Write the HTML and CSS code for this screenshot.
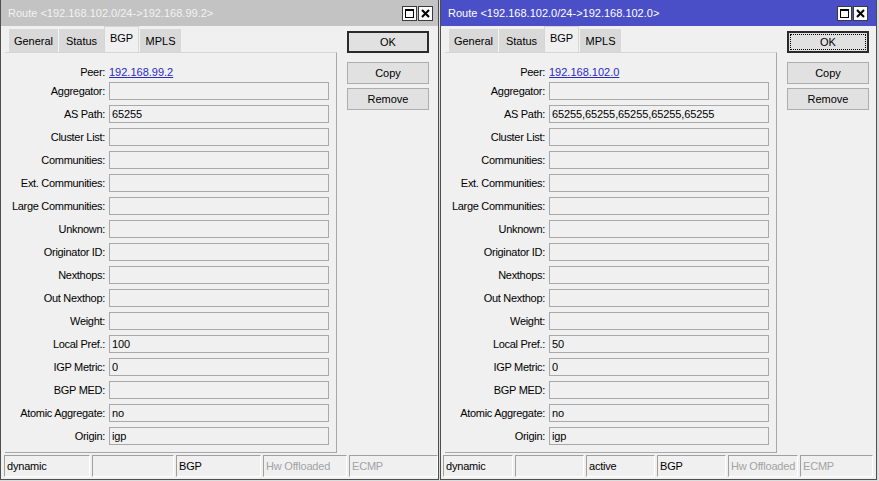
FILE: index.html
```html
<!DOCTYPE html>
<html>
<head>
<meta charset="utf-8">
<link rel="stylesheet" href="styles.css">
</head>
<body>
<div class="desktop">
  <div class="window win-left">
    <div class="titlebar inactive">
      <span class="title">Route &lt;192.168.102.0/24-&gt;192.168.99.2&gt;</span>
      <div class="tbtns">
        <span class="tbtn"><svg width="11" height="11" viewBox="0 0 11 11"><rect x="1.5" y="1.5" width="8" height="8" fill="none" stroke="#000" stroke-width="1"/><rect x="1" y="1" width="9" height="2" fill="#000"/></svg></span>
        <span class="tbtn"><svg width="11" height="11" viewBox="0 0 11 11"><path d="M2 2 L9 9 M9 2 L2 9" stroke="#000" stroke-width="2"/></svg></span>
      </div>
    </div>
    <div class="main">
      <div class="leftcol">
        <div class="tabs">
          <span class="tab t-general">General</span>
          <span class="tab t-status">Status</span>
          <span class="tab t-bgp sel">BGP</span>
          <span class="tab t-mpls">MPLS</span>
        </div>
        <div class="panel">
          <div class="row peer"><span class="lbl">Peer:</span><a class="link">192.168.99.2</a></div>
          <div class="row"><span class="lbl">Aggregator:</span><span class="box"></span></div>
          <div class="row"><span class="lbl">AS Path:</span><span class="box">65255</span></div>
          <div class="row"><span class="lbl">Cluster List:</span><span class="box"></span></div>
          <div class="row"><span class="lbl">Communities:</span><span class="box"></span></div>
          <div class="row"><span class="lbl">Ext. Communities:</span><span class="box"></span></div>
          <div class="row"><span class="lbl">Large Communities:</span><span class="box"></span></div>
          <div class="row"><span class="lbl">Unknown:</span><span class="box"></span></div>
          <div class="row"><span class="lbl">Originator ID:</span><span class="box"></span></div>
          <div class="row"><span class="lbl">Nexthops:</span><span class="box"></span></div>
          <div class="row"><span class="lbl">Out Nexthop:</span><span class="box"></span></div>
          <div class="row"><span class="lbl">Weight:</span><span class="box"></span></div>
          <div class="row"><span class="lbl">Local Pref.:</span><span class="box">100</span></div>
          <div class="row"><span class="lbl">IGP Metric:</span><span class="box">0</span></div>
          <div class="row"><span class="lbl">BGP MED:</span><span class="box"></span></div>
          <div class="row"><span class="lbl">Atomic Aggregate:</span><span class="box">no</span></div>
          <div class="row"><span class="lbl">Origin:</span><span class="box">igp</span></div>
        </div>
      </div>
      <div class="buttons">
        <span class="btn default">OK</span>
        <span class="btn gap">Copy</span>
        <span class="btn">Remove</span>
      </div>
    </div>
    <div class="status st-left">
      <span class="cell">dynamic</span>
      <span class="cell"></span>
      <span class="cell">BGP</span>
      <span class="cell dim">Hw Offloaded</span>
      <span class="cell dim">ECMP</span>
    </div>
  </div>

  <div class="window win-right">
    <div class="titlebar active">
      <span class="title">Route &lt;192.168.102.0/24-&gt;192.168.102.0&gt;</span>
      <div class="tbtns">
        <span class="tbtn"><svg width="11" height="11" viewBox="0 0 11 11"><rect x="1.5" y="1.5" width="8" height="8" fill="none" stroke="#000" stroke-width="1"/><rect x="1" y="1" width="9" height="2" fill="#000"/></svg></span>
        <span class="tbtn"><svg width="11" height="11" viewBox="0 0 11 11"><path d="M2 2 L9 9 M9 2 L2 9" stroke="#000" stroke-width="2"/></svg></span>
      </div>
    </div>
    <div class="main">
      <div class="leftcol">
        <div class="tabs">
          <span class="tab t-general">General</span>
          <span class="tab t-status">Status</span>
          <span class="tab t-bgp sel">BGP</span>
          <span class="tab t-mpls">MPLS</span>
        </div>
        <div class="panel">
          <div class="row peer"><span class="lbl">Peer:</span><a class="link">192.168.102.0</a></div>
          <div class="row"><span class="lbl">Aggregator:</span><span class="box"></span></div>
          <div class="row"><span class="lbl">AS Path:</span><span class="box">65255,65255,65255,65255,65255</span></div>
          <div class="row"><span class="lbl">Cluster List:</span><span class="box"></span></div>
          <div class="row"><span class="lbl">Communities:</span><span class="box"></span></div>
          <div class="row"><span class="lbl">Ext. Communities:</span><span class="box"></span></div>
          <div class="row"><span class="lbl">Large Communities:</span><span class="box"></span></div>
          <div class="row"><span class="lbl">Unknown:</span><span class="box"></span></div>
          <div class="row"><span class="lbl">Originator ID:</span><span class="box"></span></div>
          <div class="row"><span class="lbl">Nexthops:</span><span class="box"></span></div>
          <div class="row"><span class="lbl">Out Nexthop:</span><span class="box"></span></div>
          <div class="row"><span class="lbl">Weight:</span><span class="box"></span></div>
          <div class="row"><span class="lbl">Local Pref.:</span><span class="box">50</span></div>
          <div class="row"><span class="lbl">IGP Metric:</span><span class="box">0</span></div>
          <div class="row"><span class="lbl">BGP MED:</span><span class="box"></span></div>
          <div class="row"><span class="lbl">Atomic Aggregate:</span><span class="box">no</span></div>
          <div class="row"><span class="lbl">Origin:</span><span class="box">igp</span></div>
        </div>
      </div>
      <div class="buttons">
        <span class="btn default focus">OK</span>
        <span class="btn gap">Copy</span>
        <span class="btn">Remove</span>
      </div>
    </div>
    <div class="status st-right">
      <span class="cell">dynamic</span>
      <span class="cell"></span>
      <span class="cell">active</span>
      <span class="cell">BGP</span>
      <span class="cell dim">Hw Offloaded</span>
      <span class="cell dim">ECMP</span>
    </div>
  </div>
</div>
</body>
</html>
```

FILE: styles.css
```css
html, body {
  margin: 0;
  padding: 0;
}
body {
  background: #dcdcdc;
  font-family: "Liberation Sans", Arial, sans-serif;
  font-size: 11px;
  color: #000;
}
.desktop {
  display: flex;
  height: 481px;
  overflow: hidden;
}
.window {
  box-sizing: border-box;
  height: 480px;
  background: #f0f0f0;
  border: 1px solid #4e4e4e;
  border-top: 0;
  display: flex;
  flex-direction: column;
}
.win-left {
  width: 439px;
}
.win-right {
  width: 437px;
  margin-left: 1px;
}
.titlebar {
  height: 26px;
  flex: none;
  display: flex;
  align-items: center;
  padding: 0 5px 0 7px;
  font-size: 11px;
}
.titlebar.inactive {
  background: #c3c3c3;
  color: #f2f2f2;
}
.titlebar.active {
  background: #4b4fc7;
  color: #ffffff;
}
.win-right .titlebar {
  padding-right: 8px;
}
.tbtns {
  margin-left: auto;
  display: flex;
  gap: 1px;
}
.tbtn {
  box-sizing: border-box;
  width: 15px;
  height: 15px;
  background: #fbfbfb;
  border: 1px solid #3a3a3a;
  display: flex;
  align-items: center;
  justify-content: center;
}
.main {
  display: flex;
  height: 427px;
  flex: none;
}
.leftcol {
  margin-left: 4px;
  width: 332px;
  display: flex;
  flex-direction: column;
}
.tabs {
  height: 26px;
  display: flex;
  align-items: flex-end;
  padding-left: 4px;
}
.tab {
  box-sizing: border-box;
  height: 23px;
  background: #d9d9d9;
  border-left: 1px solid #f4f4f4;
  display: flex;
  align-items: center;
  justify-content: center;
}
.t-general { width: 49px; border-left: 0; }
.t-status { width: 46px; }
.t-bgp { width: 35px; }
.t-mpls { width: 42px; }
.tab.sel {
  height: 26px;
  background: #f0f0f0;
  border: 1px solid #d6d6d6;
  border-bottom: 0;
  padding-bottom: 3px;
}
.panel {
  box-sizing: border-box;
  height: 401px;
  border-top: 1px solid #d6d6d6;
  border-right: 1px solid #a8a8a8;
  border-bottom: 1px solid #a8a8a8;
  padding-top: 10px;
  display: flex;
  flex-direction: column;
}
.row {
  display: flex;
  height: 18px;
  margin-top: 5px;
  align-items: center;
}
.row.peer {
  margin-top: 0;
}
.row.peer + .row {
  margin-top: 1px;
}
.lbl {
  box-sizing: border-box;
  width: 104px;
  padding-right: 4px;
  text-align: right;
  white-space: nowrap;
  letter-spacing: -0.3px;
}
.box {
  box-sizing: border-box;
  width: 220px;
  height: 18px;
  border: 1px solid #a9a9a9;
  background: #f0f0f0;
  padding-left: 2px;
  line-height: 16px;
  white-space: nowrap;
  letter-spacing: -0.1px;
}
.link {
  color: #2a2ac4;
  text-decoration: underline;
}
.buttons {
  margin-left: 10px;
  margin-top: 5px;
  display: flex;
  flex-direction: column;
}
.btn {
  box-sizing: border-box;
  width: 82px;
  height: 22px;
  background: #e1e1e1;
  border: 1px solid #adadad;
  display: flex;
  align-items: center;
  justify-content: center;
  margin-top: 4px;
}
.btn.default {
  margin-top: 0;
  border: 2px solid #2b2b2b;
}
.btn.gap {
  margin-top: 9px;
}
.btn.focus {
  outline: 1px dotted #000;
  outline-offset: -4px;
}
.status {
  margin-top: 2px;
  height: 22px;
  display: flex;
  gap: 2px;
  padding-left: 3px;
}
.st-right {
  padding-left: 2px;
}
.cell {
  box-sizing: border-box;
  height: 22px;
  border: 1px solid;
  border-color: #a0a0a0 #ffffff #ffffff #a0a0a0;
  padding-left: 2px;
  line-height: 20px;
  white-space: nowrap;
  overflow: hidden;
  letter-spacing: -0.2px;
}
.cell.dim {
  color: #a3a3a3;
}
.st-left .cell:nth-child(1) { width: 86px; }
.st-left .cell:nth-child(2) { width: 82px; }
.st-left .cell:nth-child(3) { width: 85px; }
.st-left .cell:nth-child(4) { width: 84px; }
.st-left .cell:nth-child(5) { width: 89px; }
.st-right .cell:nth-child(1) { width: 70px; }
.st-right .cell:nth-child(2) { width: 69px; }
.st-right .cell:nth-child(3) { width: 69px; }
.st-right .cell:nth-child(4) { width: 69px; }
.st-right .cell:nth-child(5) { width: 70px; }
.st-right .cell:nth-child(6) { width: 73px; }
```
